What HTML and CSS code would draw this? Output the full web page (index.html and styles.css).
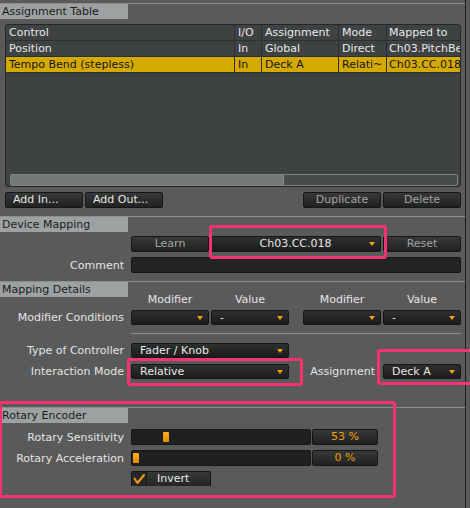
FILE: index.html
```html
<!DOCTYPE html>
<html>
<head>
<meta charset="utf-8">
<link rel="stylesheet" href="styles.css">
</head>
<body>
<div class="screen">
  <div class="panel">
    <section class="sec">
      <div class="sec-head"><div class="tab">Assignment Table</div></div>
      <div class="table">
        <div class="trow">
          <div class="cell">Control</div><div class="cell">I/O</div><div class="cell">Assignment</div><div class="cell">Mode</div><div class="cell">Mapped to</div>
        </div>
        <div class="trow">
          <div class="cell">Position</div><div class="cell">In</div><div class="cell">Global</div><div class="cell">Direct</div><div class="cell">Ch03.PitchBe</div>
        </div>
        <div class="trow sel">
          <div class="cell">Tempo Bend (stepless)</div><div class="cell">In</div><div class="cell">Deck A</div><div class="cell">Relati~</div><div class="cell">Ch03.CC.018</div>
        </div>
        <div class="tfill"></div>
        <div class="hscroll"><div class="thumb"></div></div>
      </div>
      <div class="btnrow">
        <div class="btn w78 left">Add In...</div>
        <div class="btn w78 left">Add Out...</div>
        <div class="spacer"></div>
        <div class="btn w78 dis">Duplicate</div>
        <div class="btn w78 dis">Delete</div>
      </div>
    </section>

    <section class="sec s2">
      <div class="sec-head"><div class="tab">Device Mapping</div></div>
      <div class="frow r-learn">
        <div class="lbl"></div>
        <div class="btn w78 dis">Learn</div>
        <div class="dd w170 center"><span class="dtext">Ch03.CC.018</span><span class="arr"></span></div>
        <div class="btn w78 dis">Reset</div>
      </div>
      <div class="frow r-comment">
        <div class="lbl">Comment</div>
        <div class="field"></div>
      </div>
    </section>

    <section class="sec s3">
      <div class="sec-head"><div class="tab">Mapping Details</div></div>
      <div class="frow r-cols">
        <div class="lbl"></div>
        <div class="pairs">
          <div class="pair"><span class="colh">Modifier</span><span class="colh">Value</span></div>
          <div class="pair"><span class="colh">Modifier</span><span class="colh">Value</span></div>
        </div>
      </div>
      <div class="frow r-mod">
        <div class="lbl">Modifier Conditions</div>
        <div class="pairs">
          <div class="pair">
            <div class="dd w78"><span class="dtext"></span><span class="arr"></span></div>
            <div class="dd w78"><span class="dtext">-</span><span class="arr"></span></div>
          </div>
          <div class="pair">
            <div class="dd w78"><span class="dtext"></span><span class="arr"></span></div>
            <div class="dd w78"><span class="dtext">-</span><span class="arr"></span></div>
          </div>
        </div>
      </div>
      <div class="frow r-sep">
        <div class="lbl"></div>
        <div class="hline"></div>
      </div>
      <div class="frow r-type">
        <div class="lbl">Type of Controller</div>
        <div class="dd w158"><span class="dtext">Fader / Knob</span><span class="arr"></span></div>
      </div>
      <div class="frow r-inter">
        <div class="lbl">Interaction Mode</div>
        <div class="dd w158"><span class="dtext">Relative</span><span class="arr"></span></div>
        <div class="lbl2">Assignment</div>
        <div class="dd w78"><span class="dtext">Deck A</span><span class="arr"></span></div>
      </div>
    </section>

    <section class="sec s4">
      <div class="sec-head"><div class="tab">Rotary Encoder</div></div>
      <div class="frow r-sens">
        <div class="lbl">Rotary Sensitivity</div>
        <div class="slider"><div class="knob" style="margin-left:30px"></div></div>
        <div class="val">53 %</div>
      </div>
      <div class="frow r-acc">
        <div class="lbl">Rotary Acceleration</div>
        <div class="slider"><div class="knob" style="margin-left:0px"></div></div>
        <div class="val">0 %</div>
      </div>
      <div class="frow r-inv">
        <div class="lbl"></div>
        <div class="check">
          <div class="cbox"><svg width="14" height="14" viewBox="0 0 14 14"><polyline points="2.5,6.5 5.5,11 12,3" fill="none" stroke="#f29a10" stroke-width="2" stroke-linecap="round" stroke-linejoin="round"/></svg></div>
          <div class="ctext">Invert</div>
        </div>
      </div>
    </section>
  </div>

  <div class="hl hl1"></div>
  <div class="hl hl2"></div>
  <div class="hl hl3"></div>
  <div class="hl hl4"></div>
</div>
</body>
</html>
```

FILE: styles.css
```css
* { box-sizing: border-box; }
html, body { margin: 0; padding: 0; }
body {
  width: 470px;
  height: 508px;
  overflow: hidden;
  background: #5a5a5a;
  font-family: "DejaVu Sans", "Verdana", sans-serif;
  font-size: 11px;
  color: #e4e4e4;
}
.screen { position: relative; width: 470px; height: 508px; overflow: hidden; }
.panel {
  width: 466px;
  height: 508px;
  padding-top: 3px;
  border-right: 1px solid #1e1e1e;
}

.sec-head { border-top: 1px solid #8e8e8e; height: 16px; }
.tab {
  width: 128px;
  height: 15px;
  background: #9da1a1;
  color: #1c1c1c;
  line-height: 15px;
  padding-left: 2px;
  white-space: nowrap;
}

/* table */
.table {
  margin: 5px 4px 0 5px;
  height: 163px;
  border: 1px solid #252828;
  border-radius: 3px;
  background: #3e4242;
  display: flex;
  flex-direction: column;
  overflow: hidden;
}
.trow {
  display: grid;
  grid-template-columns: 229px 27px 77px 48px 1fr;
  height: 16px;
  border-bottom: 1px solid #2c3030;
  flex: none;
}
.cell {
  padding-left: 3px;
  line-height: 15px;
  border-right: 1px solid #2c3030;
  white-space: nowrap;
  overflow: hidden;
  color: #e8e8e8;
}
.cell:last-child { border-right: none; padding-left: 2px; }
.trow.sel { background: #d5aa00; }
.trow.sel .cell { color: #141414; }
.tfill { flex: 1; }
.hscroll {
  height: 12px;
  margin: 0 2px 0 4px;
  border: 1px solid #7e8282;
  border-radius: 2px;
  background: #474b4b;
  flex: none;
  overflow: hidden;
}
.thumb { width: 273px; height: 100%; background: #747878; border-right: 1px solid #8a8e8e; }

/* buttons */
.btnrow { display: flex; gap: 2px; margin: 5px 4px 0 5px; }
.spacer { flex: 1; }
.btn, .dd, .val {
  height: 16px;
  border: 1px solid #151616;
  border-radius: 2px;
  background: linear-gradient(#373939, #202121);
  color: #e6e6e6;
  line-height: 14px;
  text-align: center;
  white-space: nowrap;
  flex: none;
}
.btn.left { text-align: left; padding-left: 7px; }
.btn.dis { color: #a4a4a4; }
.w78 { width: 78px; }
.w158 { width: 158px; }
.w170 { width: 170px; }

.dd {
  display: flex;
  align-items: center;
  padding: 0 4px 0 8px;
  background: linear-gradient(#2e3030, #1b1c1c);
  text-align: left;
}
.dd .dtext { flex: 1; }
.dd.center .dtext { text-align: center; padding-left: 2px; }
.arr {
  width: 0;
  height: 0;
  border-left: 3.5px solid transparent;
  border-right: 3.5px solid transparent;
  border-top: 4px solid #f5a010;
  margin-right: 1px;
  flex: none;
}

/* form rows */
.frow { display: flex; align-items: center; }
.lbl {
  width: 124px;
  margin-right: 7px;
  text-align: right;
  white-space: nowrap;
  flex: none;
}
.r-learn { margin-top: 4px; gap: 2px; }
.r-learn .lbl { margin-right: 5px; }
.r-comment { margin-top: 5px; }
.field {
  width: 330px;
  height: 16px;
  border: 1px solid #151616;
  border-radius: 2px;
  background: #222424;
}
.s2 { margin-top: 8px; }
.s3 { margin-top: 8px; }
.s4 { margin-top: 28px; }

.r-cols { margin-top: -4px; height: 13px; line-height: 13px; }
.pairs { display: flex; gap: 14px; }
.pair { display: flex; gap: 2px; }
.colh { width: 78px; text-align: center; }
.r-mod { margin-top: 4px; }
.r-mod .dd, .r-type .dd, .r-inter .dd { height: 15px; line-height: 13px; }
.r-sep { margin-top: 8px; }
.hline { width: 330px; height: 1px; background: #8e8e8e; }
.r-type { margin-top: 9px; }
.r-inter { margin-top: 6px; }
.lbl2 { width: 86px; margin-right: 8px; text-align: right; flex: none; }

.r-sens { margin-top: 6px; gap: 1px; }
.r-sens .lbl, .r-acc .lbl { margin-right: 6px; }
.r-acc { margin-top: 5px; gap: 1px; }
.slider {
  width: 180px;
  height: 16px;
  border: 1px solid #161717;
  border-radius: 2px;
  background: #1f2121;
  padding: 2px 1px;
  flex: none;
}
.knob {
  width: 6px;
  height: 10px;
  border-radius: 1px;
  background: linear-gradient(#ffae20, #e88a00);
}
.val { width: 66px; color: #f0a000; }

.r-inv { margin-top: 5px; }
.check {
  width: 80px;
  height: 15px;
  display: flex;
  border: 1px solid #151616;
  border-bottom: none;
  border-radius: 2px 2px 0 0;
  background: linear-gradient(#363838, #242525);
}
.cbox {
  width: 15px;
  border-right: 1px solid #151616;
  display: flex;
  align-items: center;
  justify-content: center;
  background: #262828;
}
.ctext { padding-left: 10px; line-height: 14px; color: #e8e8e8; }

/* pink annotation boxes (overlay) */
.hl {
  position: absolute;
  border: 3px solid #f5346f;
  border-radius: 3px;
}
.hl1 { left: 209px; top: 225px; width: 178px; height: 34px; }
.hl2 { left: 127px; top: 358px; width: 176px; height: 28px; }
.hl3 { left: 377px; top: 349px; width: 110px; height: 36px; }
.hl4 { left: -1px; top: 401px; width: 397px; height: 97px; }
```
